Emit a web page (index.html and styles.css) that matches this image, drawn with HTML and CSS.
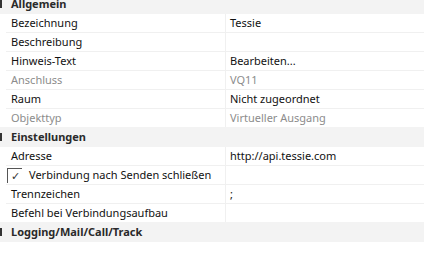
FILE: index.html
```html
<!DOCTYPE html>
<html lang="de">
<head>
  <meta charset="UTF-8">
  <title>Eigenschaften</title>
  <link rel="stylesheet" href="styles.css">
</head>
<body>
  <div class="grid">
    <div class="group"><span class="toggle"></span>Allgemein</div>
    <div class="row"><div class="key">Bezeichnung</div><div class="val">Tessie</div></div>
    <div class="row"><div class="key">Beschreibung</div><div class="val"></div></div>
    <div class="row"><div class="key">Hinweis-Text</div><div class="val">Bearbeiten...</div></div>
    <div class="row off"><div class="key">Anschluss</div><div class="val">VQ11</div></div>
    <div class="row"><div class="key">Raum</div><div class="val">Nicht zugeordnet</div></div>
    <div class="row off last"><div class="key">Objekttyp</div><div class="val">Virtueller Ausgang</div></div>

    <div class="group"><span class="toggle"></span>Einstellungen</div>
    <div class="row"><div class="key">Adresse</div><div class="val">http://api.tessie.com</div></div>
    <div class="row check-row">
      <div class="key"><span class="box">&#10003;</span><span class="check-label">Verbindung nach Senden schließen</span></div>
      <div class="val"></div>
    </div>
    <div class="row"><div class="key">Trennzeichen</div><div class="val">;</div></div>
    <div class="row last"><div class="key">Befehl bei Verbindungsaufbau</div><div class="val"></div></div>

    <div class="group"><span class="toggle"></span>Logging/Mail/Call/Track</div>
  </div>
</body>
</html>
```

FILE: styles.css
```css
body {
  margin: 0;
  font-family: "Segoe UI", "Noto Sans", sans-serif;
  font-size: 11px;
  color: #111;
  background: #fff;
}

.grid {
  margin-top: -6px;
}

.group {
  position: relative;
  height: 20px;
  line-height: 20px;
  padding-left: 11px;
  background: #f3f3f3;
  font-weight: bold;
  color: #2a2a2a;
}

.toggle {
  position: absolute;
  left: 0;
  top: 6px;
  width: 2px;
  height: 8px;
  background: #333;
}

.row {
  display: grid;
  grid-template-columns: 219px 1fr;
  margin-left: 6px;
  height: 19px;
  border-bottom: 1px solid #f0f0f0;
  box-sizing: border-box;
  line-height: 18px;
}

.row.last {
  height: 18px;
  border-bottom: none;
}

.key {
  padding-left: 5px;
  white-space: nowrap;
}

.val {
  padding-left: 4px;
  border-left: 1px solid #f0f0f0;
  white-space: nowrap;
}

.off .key,
.off .val {
  color: #8c8c8c;
}

.check-row .key {
  display: flex;
  align-items: center;
  padding-left: 1px;
}

.box {
  width: 15px;
  height: 15px;
  border-top: 1px solid #555;
  border-left: 1px solid #555;
  box-sizing: border-box;
  font-size: 11px;
  line-height: 14px;
  text-align: center;
  color: #333;
}

.check-label {
  margin-left: 7px;
}
```
